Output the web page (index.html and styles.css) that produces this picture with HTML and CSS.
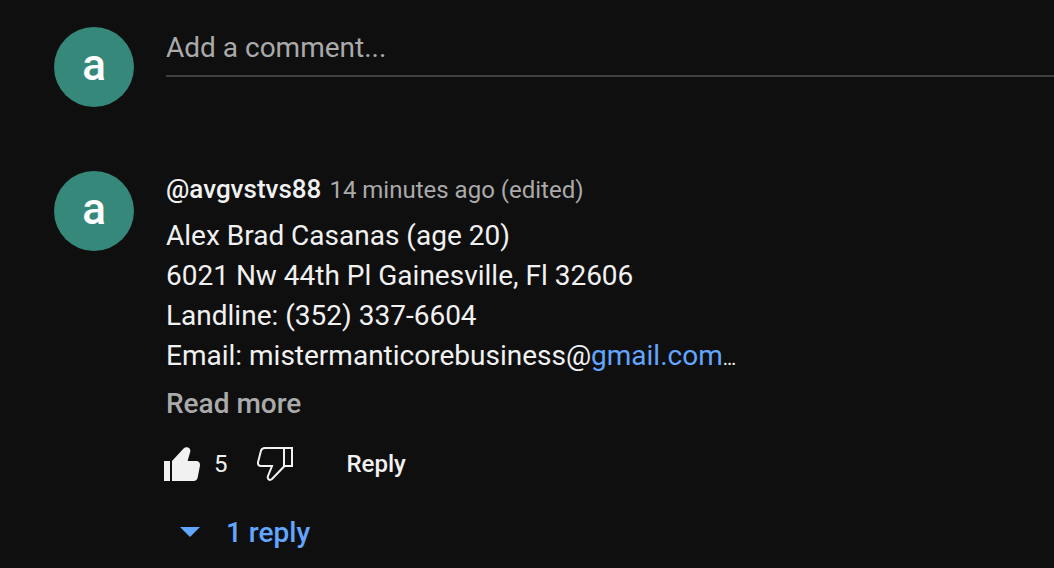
FILE: index.html
```html
<!DOCTYPE html>
<html lang="en">
<head>
  <meta charset="UTF-8">
  <meta name="viewport" content="width=device-width, initial-scale=1.0">
  <title>Comments</title>
  <link rel="stylesheet" href="styles.css">
</head>
<body>
  <main class="comments">
    <form class="row add-comment">
      <div class="avatar">a</div>
      <input class="comment-input" type="text" placeholder="Add a comment..." aria-label="Add a comment">
    </form>

    <article class="row comment">
      <div class="avatar">a</div>
      <div class="comment-main">
        <header class="comment-header">
          <a class="author" href="#">@avgvstvs88</a>
          <a class="time" href="#">14 minutes ago (edited)</a>
        </header>
        <p class="comment-text">Alex Brad Casanas (age 20)<br>
          6021 Nw 44th Pl Gainesville, Fl 32606<br>
          Landline: (352) 337-6604<br>
          Email: mistermanticorebusiness@<a class="link" href="#">gmail.com</a><span class="ellipsis">…</span></p>
        <button class="read-more" type="button">Read more</button>
        <div class="actions">
          <button class="icon-btn" type="button" aria-label="Like">
            <svg width="36" height="34" viewBox="0 0 36 34"><path fill="#f1f1f1" d="M0 14h6v20H0zM8 14L19.6 1.400C21 0 22.500 0 24 .500C26 1.200 26.700 3 26.200 5L23.600 14H32C35 14 36.400 16 35.900 19L33.800 30C33.300 32.800 32 34 29.500 34H8z"/></svg>
          </button>
          <span class="like-count">5</span>
          <button class="icon-btn" type="button" aria-label="Dislike">
            <svg width="36" height="34" viewBox="0 0 36 34"><path fill="none" stroke="#f1f1f1" stroke-width="2" d="M27 1H8C5.500 1 4.400 2 3.900 4L1.200 14.500C.500 17.500 1.600 19 4.200 19H15L11 29C10 32 12.500 34 15 32L27 19.500zM27 1h8v18h-8"/></svg>
          </button>
          <button class="reply-btn" type="button">Reply</button>
        </div>
        <button class="replies" type="button">
          <svg width="20" height="10" viewBox="0 0 20 10"><path fill="#61a6ff" d="M0 0h20L10 10z"/></svg>
          1 reply
        </button>
      </div>
    </article>
  </main>
</body>
</html>
```

FILE: styles.css
```css
* {
  box-sizing: border-box;
}

body {
  margin: 0;
  background-color: #0f0f0f;
  color: #f1f1f1;
  font-family: Roboto, sans-serif;
  font-size: 28px;
}

button {
  padding: 0;
  border: 0;
  background: none;
  color: inherit;
  font: inherit;
  cursor: pointer;
}

a {
  text-decoration: none;
}

svg {
  display: block;
}

.comments {
  padding: 27px 0 0 54px;
}

.row {
  display: flex;
  align-items: flex-start;
  gap: 32px;
}

.add-comment {
  margin-bottom: 64px;
}

.avatar {
  flex: none;
  width: 80px;
  height: 80px;
  border-radius: 50%;
  background-color: #36897a;
  color: #fff;
  font-size: 44px;
  font-weight: 500;
  line-height: 76px;
  text-align: center;
}

.comment-input {
  flex: 1;
  min-width: 0;
  height: 50px;
  padding: 0 0 8px;
  border: 0;
  border-bottom: 2px solid #3f3f3f;
  outline: none;
  background: none;
  color: #f1f1f1;
  font: inherit;
}

.comment-input::placeholder {
  color: #aaa;
  opacity: 1;
}

.comment-main {
  flex: 1;
  min-width: 0;
}

.comment-header {
  display: flex;
  align-items: baseline;
  gap: 8px;
  margin-bottom: 8px;
  line-height: 36px;
}

.author {
  color: #f1f1f1;
  font-size: 26px;
  font-weight: 500;
}

.time {
  color: #aaa;
  font-size: 24px;
}

.comment-text {
  margin: 0;
  line-height: 40px;
}

.link {
  color: #61a6ff;
}

.ellipsis {
  font-size: 20px;
}

.read-more {
  display: block;
  margin-top: 6px;
  color: #aaa;
  font-weight: 500;
  line-height: 40px;
}

.actions {
  display: flex;
  align-items: center;
  height: 64px;
  margin: 8px 0 0 -2px;
  font-size: 24px;
}

.like-count {
  margin: 0 29px 0 14px;
}

.reply-btn {
  margin-left: 54px;
  font-weight: 500;
}

.replies {
  display: flex;
  align-items: center;
  gap: 26px;
  height: 72px;
  padding-left: 14px;
  color: #61a6ff;
  font-weight: 500;
}
```
